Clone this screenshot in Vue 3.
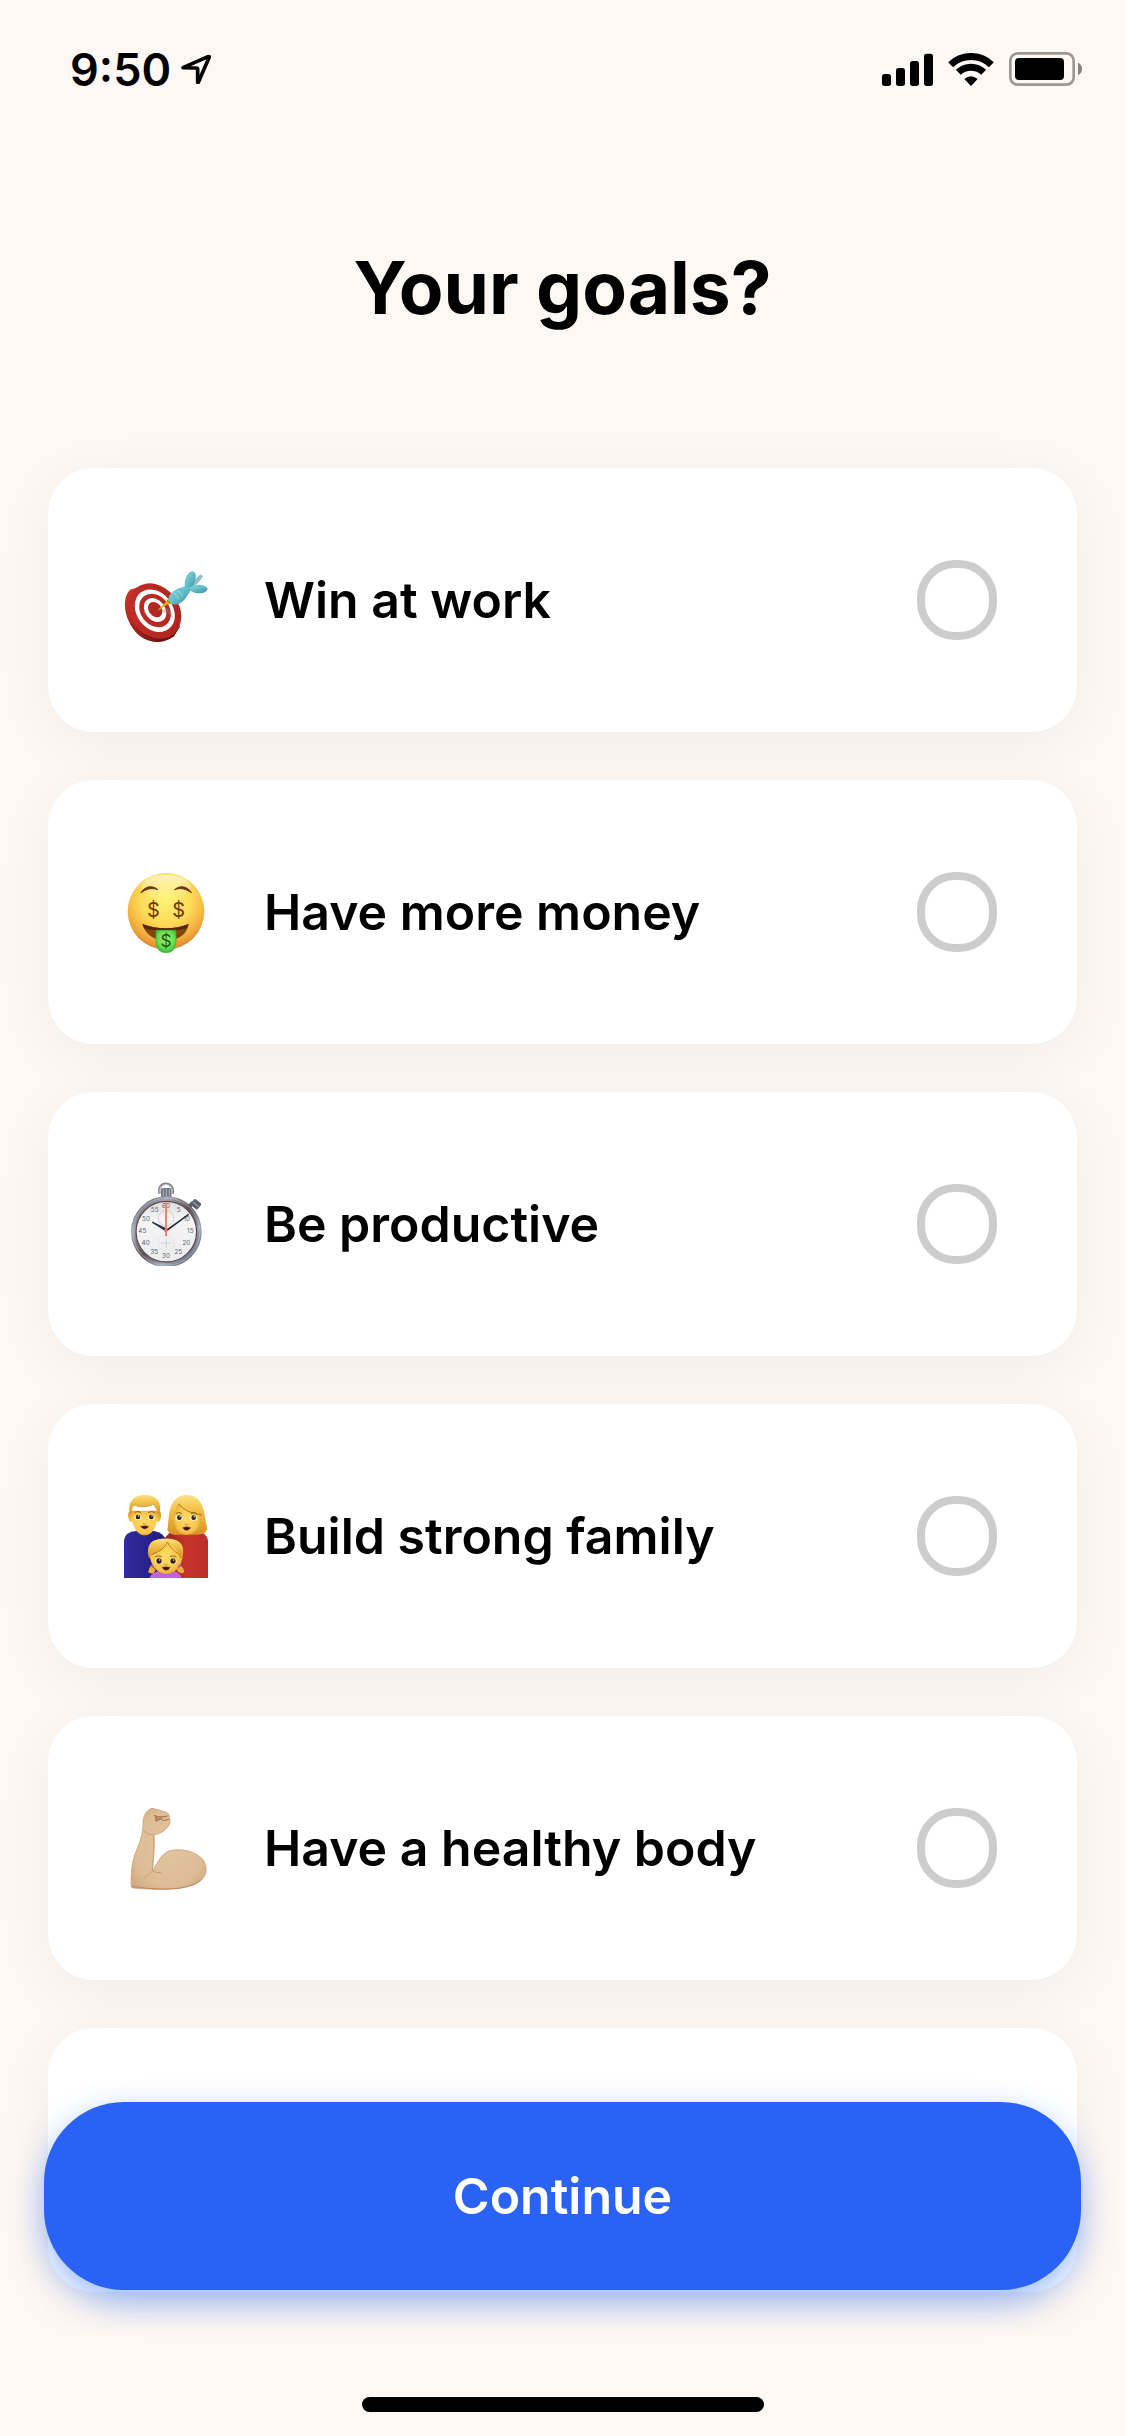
<script setup>
import { ref } from 'vue'

const goals = [
  { id: 'work', label: 'Win at work', box: '72 24 252 252' },
  { id: 'money', label: 'Have more money', box: '72 60 252 252' },
  { id: 'time', label: 'Be productive', box: '72 51 252 252' },
  { id: 'family', label: 'Build strong family', box: '72 57 252 252' },
  { id: 'body', label: 'Have a healthy body', box: '72 48 252 252' },
]
const selected = ref([])

const dial = [
  ['60', 198, 130], ['5', 236, 140], ['10', 260, 167], ['15', 271, 204],
  ['20', 259, 239], ['25', 235, 267], ['30', 198, 278], ['35', 163, 267],
  ['40', 137, 239], ['45', 127, 204], ['50', 138, 167], ['55', 164, 140],
]
</script>

<template>
  <div class="screen">
    <header class="status">
      <div class="clock">
        <span>9:50</span>
        <svg class="arrow" viewBox="540 99 90 90" aria-hidden="true">
          <path d="M546 140 L621 107 Q626 105 624 110 L592 184 L590 184 L590 145 Q590 141 586 141 Z" fill="none" stroke="#000" stroke-width="11" stroke-linejoin="round" />
        </svg>
      </div>
      <div class="indicators">
        <svg class="signal" viewBox="126 96 153 99" aria-hidden="true">
          <rect x="126" y="159" width="27" height="36" rx="8" />
          <rect x="168" y="141" width="27" height="54" rx="8" />
          <rect x="210" y="120" width="27" height="75" rx="8" />
          <rect x="252" y="98" width="27" height="97" rx="8" />
        </svg>
        <svg class="wifi" viewBox="324 96 138 99" aria-hidden="true">
          <g fill="none" stroke="#000" stroke-width="21">
            <path d="M332 131 A88 88 0 0 1 454 131" />
            <path d="M355 154 A55 55 0 0 1 431 154" />
          </g>
          <path d="M393 195 L373 174 Q393 158 413 174 Z" />
        </svg>
        <svg class="battery" viewBox="507 96 219 102" aria-hidden="true">
          <rect x="511" y="100" width="190" height="94" rx="22" fill="none" stroke="#9b9793" stroke-width="8" />
          <rect x="525" y="114" width="147" height="66" rx="12" />
          <path d="M714 128 Q726 133 726 147 Q726 160 714 165 Z" fill="#85817e" />
        </svg>
      </div>
    </header>

    <h1 class="title">Your goals?</h1>

    <main class="goals">
      <label v-for="goal in goals" :key="goal.id" class="card">
        <svg class="emoji" :viewBox="goal.box" aria-hidden="true">
          <template v-if="goal.id === 'work'">
            <defs>
              <linearGradient id="rim" x1="0" y1="0" x2="1" y2="1">
                <stop offset="0" stop-color="#cf3a30" /><stop offset=".5" stop-color="#a3211c" /><stop offset="1" stop-color="#4a0d0a" />
              </linearGradient>
              <linearGradient id="face" x1="0" y1="0" x2="1" y2="1">
                <stop offset="0" stop-color="#c62e27" /><stop offset="1" stop-color="#aa241e" />
              </linearGradient>
              <linearGradient id="dart" x1="0" y1="0" x2="1" y2="1">
                <stop offset="0" stop-color="#8fd6de" /><stop offset=".5" stop-color="#62bdc8" /><stop offset="1" stop-color="#398d99" />
              </linearGradient>
            </defs>
            <path d="M90 119 C64 146 72 204 105 244 C136 281 188 286 222 259 L240 230 L120 110 Z" fill="url(#rim)" />
            <g transform="rotate(-38 165 183)">
              <ellipse cx="165" cy="183" rx="72" ry="89" fill="url(#face)" />
              <ellipse cx="165" cy="182" rx="54" ry="69" fill="#fff" />
              <ellipse cx="166" cy="182" rx="43" ry="54" fill="#b82923" />
              <ellipse cx="167" cy="181" rx="30" ry="39" fill="#fff" />
              <ellipse cx="168" cy="180" rx="19" ry="25" fill="#b32822" />
            </g>
            <path d="M178 184 L204 191 L220 207 L218 191 L203 174 Z" fill="#8e8581" opacity=".35" />
            <path d="M173 181 L200 154 L205 144 L214 157 L218 162 L203 163 L176 181 Z" fill="#dfb51f" />
            <path d="M200 150 L211 160" stroke="#8c680c" stroke-width="3" />
            <path d="M265 110 L299 75 Q307 71 308 79 Q305 90 280 112 Z" fill="#8dbfc5" />
            <path d="M254 112 C252 86 264 64 278 64 C292 67 291 91 273 116 Z" fill="url(#dart)" />
            <path d="M265 116 C281 98 315 102 323 116 C320 130 291 136 271 122 Z" fill="url(#dart)" />
            <path d="M206 151 C204 132 223 118 247 112 L265 109 L272 121 C261 140 249 163 225 164 Q213 164 206 151 Z" fill="url(#dart)" />
            <path d="M220 128 Q233 135 237 148 M232 122 Q244 129 248 140" fill="none" stroke="#a5e2e8" stroke-width="3" opacity=".7" />
          </template>

          <template v-else-if="goal.id === 'money'">
            <defs>
              <radialGradient id="skin" cx=".5" cy=".33" r=".66">
                <stop offset="0" stop-color="#fff477" /><stop offset=".5" stop-color="#fddc58" /><stop offset=".8" stop-color="#f4b23e" /><stop offset="1" stop-color="#df8930" />
              </radialGradient>
              <linearGradient id="shine" x1="0" y1="0" x2="0" y2="1">
                <stop offset="0" stop-color="#fff" stop-opacity=".6" /><stop offset="1" stop-color="#fff" stop-opacity="0" />
              </linearGradient>
              <radialGradient id="tongue" cx=".5" cy=".4" r=".65">
                <stop offset="0" stop-color="#a4f471" /><stop offset=".65" stop-color="#62df4b" /><stop offset="1" stop-color="#27a536" />
              </radialGradient>
            </defs>
            <circle cx="198" cy="184" r="115" fill="url(#skin)" />
            <ellipse cx="198" cy="110" rx="73" ry="36" fill="url(#shine)" />
            <path d="M123 128 C135 108 158 105 173 119 C154 112 139 117 123 128 Z M224 119 C239 105 262 108 274 128 C257 117 243 112 224 119 Z" fill="#6a310c" stroke="#6a310c" stroke-width="3" stroke-linejoin="round" />
            <path d="M127 222 C170 239 226 239 266 222 C262 249 241 271 198 272 C156 271 134 248 127 222 Z" fill="#80470c" />
            <path d="M127 222 C170 239 226 239 266 222 L260 235 C223 246 174 246 133 235 Z" fill="#58270a" />
            <path d="M168 241 L228 241 L228 278 Q225 308 198 308 Q171 308 168 278 Z" fill="url(#tongue)" stroke="#42b73b" stroke-width="2" />
            <g class="dollar"><text x="160" y="200">$</text><text x="236" y="200">$</text><text class="small" x="198" y="290">$</text></g>
          </template>

          <template v-else-if="goal.id === 'time'">
            <defs>
              <linearGradient id="steel" x1="0" y1="0" x2="1" y2="1">
                <stop offset="0" stop-color="#4c4b54" /><stop offset=".25" stop-color="#a5a8b3" /><stop offset=".5" stop-color="#594c50" /><stop offset=".72" stop-color="#9da9bb" /><stop offset="1" stop-color="#454652" />
              </linearGradient>
              <linearGradient id="dial" x1="0" y1="0" x2="0" y2="1">
                <stop offset="0" stop-color="#d8d8da" /><stop offset=".3" stop-color="#f4f4f5" /><stop offset="1" stop-color="#ececee" />
              </linearGradient>
            </defs>
            <path d="M179 86 C168 46 227 46 218 86" fill="none" stroke="#7b7e87" stroke-width="7" />
            <path d="M180 86 C170 49 225 49 216 86" fill="none" stroke="#dedfe5" stroke-width="2" />
            <rect x="183" y="69" width="31" height="31" rx="5" fill="#707681" />
            <path d="M190 71 V94 M199 71 V94 M208 71 V94" stroke="#adb3bb" stroke-width="3" />
            <path d="M266 126 L281 112" stroke="#555a65" stroke-width="12" />
            <rect x="274" y="106" width="27" height="23" rx="5" transform="rotate(39 287 118)" fill="#59616d" />
            <path d="M279 111 L296 125" stroke="#949ca6" stroke-width="4" />
            <circle cx="199" cy="200" r="99" fill="url(#dial)" stroke="url(#steel)" stroke-width="14" />
            <circle cx="199" cy="200" r="101" fill="none" stroke="#c6dcf2" stroke-width="2" opacity=".7" />
            <circle cx="199" cy="200" r="91" fill="none" stroke="#5e474b" stroke-width="4" />
            <circle cx="198" cy="160" r="23" fill="none" stroke="#b9bbc0" stroke-width="3" stroke-dasharray="3 2" />
            <circle cx="199" cy="234" r="24" fill="none" stroke="#dddee0" stroke-width="3" stroke-dasharray="4 3" />
            <path d="M199 220 V252 M184 234 H214" stroke="#c5c7ca" stroke-width="2" />
            <g class="numbers"><text v-for="[n, x, y] in dial" :key="n" :x="x" :y="y">{{ n }}</text></g>
            <path d="M158 172 L199 198 L265 149 L202 194 Z" fill="#283342" stroke="#283342" stroke-width="4" stroke-linejoin="round" />
            <path d="M198 110 V214" stroke="#eb8768" stroke-width="6" />
            <circle cx="198" cy="196" r="5" fill="#df7354" />
          </template>

          <template v-else-if="goal.id === 'family'">
            <defs>
              <radialGradient id="head" cx=".48" cy=".48" r=".62">
                <stop offset="0" stop-color="#ffdc68" /><stop offset=".65" stop-color="#f9c64c" /><stop offset="1" stop-color="#d6912a" />
              </radialGradient>
              <linearGradient id="hair" x1="0" y1="0" x2="0" y2="1">
                <stop offset="0" stop-color="#fbe389" /><stop offset=".3" stop-color="#f4c850" /><stop offset="1" stop-color="#d89124" />
              </linearGradient>
              <linearGradient id="blue"><stop offset="0" stop-color="#302ca2" /><stop offset="1" stop-color="#201c78" /></linearGradient>
              <linearGradient id="red"><stop offset="0" stop-color="#9e211c" /><stop offset=".5" stop-color="#c4342b" /><stop offset="1" stop-color="#bd2e27" /></linearGradient>
            </defs>
            <path d="M72 312 V195 Q77 169 108 168 H162 Q191 173 198 196 V312 Z" fill="url(#blue)" />
            <path d="M192 312 V194 Q204 169 234 168 H290 Q319 172 324 196 V312 Z" fill="url(#red)" />
            <path d="M90 107 Q80 115 87 135 Q92 145 97 139 C103 165 116 181 134 181 C154 181 165 164 170 139 Q178 145 182 130 Q187 114 177 107 Z" fill="url(#head)" />
            <path d="M89 113 C83 82 99 60 134 60 C170 59 187 83 179 113 L173 119 Q171 99 159 89 Q126 102 104 91 Q94 100 94 118 Z" fill="url(#hair)" />
            <path d="M100 89 Q126 103 165 87" fill="none" stroke="#d09a38" stroke-width="2" />
            <path d="M202 164 C209 128 201 63 259 60 C317 59 313 128 322 163 Q315 179 292 179 H224 Q207 177 202 164 Z" fill="url(#hair)" />
            <path d="M223 108 Q213 177 260 180 Q301 175 303 123 Q268 114 235 86 Q230 100 223 108 Z" fill="url(#head)" />
            <path d="M235 86 Q256 114 306 120" fill="none" stroke="#b07822" stroke-width="3" />
            <path d="M147 312 Q153 292 177 288 H221 Q241 294 246 312 Z" fill="#bd67d6" />
            <path d="M151 251 C138 216 150 191 197 191 C245 191 256 217 246 254 Q238 292 198 297 Q160 292 151 251 Z" fill="url(#head)" />
            <path d="M147 249 C137 208 153 190 197 191 C243 190 257 212 247 249 L239 250 Q235 223 203 201 Q196 226 157 238 Z" fill="url(#hair)" />
            <path d="M157 238 Q193 225 202 201 Q213 224 239 239" fill="none" stroke="#bd7d20" stroke-width="3" />
            <path d="M155 270 Q145 280 144 292 Q160 301 167 286 Z M240 270 Q254 281 252 292 Q239 300 231 286 Z" fill="#e9ae3b" />
            <path d="M153 270 L161 277 M242 270 L235 277" stroke="#bc48ba" stroke-width="5" />
            <g fill="#fff5dc">
              <ellipse cx="114" cy="127" rx="10" ry="8" /><ellipse cx="154" cy="127" rx="10" ry="8" />
              <ellipse cx="237" cy="129" rx="11" ry="8" /><ellipse cx="281" cy="129" rx="11" ry="8" />
              <ellipse cx="176" cy="259" rx="11" ry="9" /><ellipse cx="219" cy="259" rx="11" ry="9" />
            </g>
            <g fill="#38210c">
              <circle cx="114" cy="126" r="7" /><circle cx="154" cy="126" r="7" />
              <circle cx="238" cy="128" r="7" /><circle cx="281" cy="128" r="7" />
              <circle cx="177" cy="258" r="8" /><circle cx="219" cy="258" r="8" />
            </g>
            <g fill="#fff">
              <circle cx="116" cy="123" r="2" /><circle cx="156" cy="123" r="2" />
              <circle cx="240" cy="125" r="2" /><circle cx="283" cy="125" r="2" />
              <circle cx="179" cy="255" r="2" /><circle cx="221" cy="255" r="2" />
            </g>
            <g fill="none" stroke="#936020" stroke-width="3" stroke-linecap="round">
              <path d="M105 112 Q114 106 122 112 M146 112 Q155 106 163 112 M228 115 Q237 108 245 115 M274 115 Q283 108 290 115 M167 245 Q176 240 184 244 M211 244 Q220 240 228 245" />
              <path d="M130 146 Q134 149 138 146 M255 148 Q260 151 264 148 M194 269 Q198 272 202 269" stroke="#cf8a2f" />
            </g>
            <g fill="#35130c" stroke="#a94b23" stroke-width="2">
              <path d="M122 154 Q134 151 146 154 Q143 162 134 162 Q126 162 122 154 Z" />
              <path d="M248 158 Q260 153 272 158 Q267 166 260 166 Q252 166 248 158 Z" />
              <path d="M186 277 Q198 274 211 277 Q206 286 198 286 Q191 286 186 277 Z" />
            </g>
          </template>

          <template v-else>
            <defs>
              <radialGradient id="arm" cx=".5" cy=".5" r=".7">
                <stop offset="0" stop-color="#e1c39d" /><stop offset=".65" stop-color="#dcbd95" /><stop offset="1" stop-color="#cfa27a" />
              </radialGradient>
            </defs>
            <path d="M94 290 C92 266 94 224 104 195 C116 165 128 137 129 104 C127 83 136 68 147 59 Q155 52 166 57 L198 66 Q210 72 208 82 Q212 91 209 101 C201 117 187 130 162 135 C165 169 159 206 157 242 C170 226 178 197 206 183 C249 172 296 187 313 215 C326 244 315 269 286 282 C245 299 190 301 147 297 L99 294 Q95 294 94 290 Z" fill="url(#arm)" stroke="#c8966a" stroke-width="2" />
            <path d="M96 289 Q145 298 199 297 Q275 297 302 270" fill="none" stroke="#b36e42" stroke-width="3" opacity=".6" />
            <path d="M161 136 Q163 190 158 242 Q147 255 133 263 M158 243 Q169 249 184 248 M131 122 Q143 137 161 134" fill="none" stroke="#b9814f" stroke-width="3" opacity=".5" />
            <path d="M164 78 Q174 78 178 82 L190 82 Q186 88 178 90 L167 94 Z" fill="#bf9068" />
            <path d="M162 76 L174 80 Q190 82 203 78 M168 82 L168 93 M168 94 L181 86 L190 92 L207 88" fill="none" stroke="#a87149" stroke-width="3" />
          </template>
        </svg>
        <span class="name">{{ goal.label }}</span>
        <input v-model="selected" type="checkbox" class="tick" :value="goal.id" />
      </label>
      <div class="card" aria-hidden="true"></div>
    </main>

    <footer class="dock">
      <button type="button" class="continue">Continue</button>
      <div class="home"></div>
    </footer>
  </div>
</template>

<style>
body {
  margin: 0;
  background: #fef8f4;
}
</style>

<style scoped>
.screen {
  position: relative;
  display: flex;
  flex-direction: column;
  height: 100vh;
  overflow: hidden;
  box-sizing: border-box;
  padding-bottom: 102px;
  background: #fef8f4;
  color: #000;
  font-family: Inter, "Liberation Sans", sans-serif;
  font-weight: 600;
}
.status {
  flex: none;
  display: flex;
  align-items: center;
  justify-content: space-between;
  height: 138px;
  padding: 0 43px 0 70px;
}
.clock {
  display: flex;
  align-items: center;
  gap: 10px;
  font-size: 45px;
}
.arrow {
  width: 30px;
  height: 30px;
}
.indicators {
  display: flex;
  align-items: center;
  gap: 15px;
}
.signal {
  width: 51px;
  height: 33px;
}
.wifi {
  width: 46px;
  height: 33px;
}
.battery {
  width: 73px;
  height: 34px;
}
.title {
  flex: none;
  margin: 100px 0 70px;
  font-size: 73px;
  line-height: 100px;
  font-weight: 700;
  text-align: center;
}
.goals {
  flex: 1;
  min-height: 0;
  overflow: hidden;
  display: flex;
  flex-direction: column;
  gap: 48px;
  padding: 60px 48px 0;
}
.card {
  flex: none;
  display: flex;
  align-items: center;
  gap: 56px;
  height: 264px;
  box-sizing: border-box;
  padding: 0 80px 0 76px;
  border-radius: 46px;
  background: #fff;
  box-shadow: 0 12px 60px rgba(0, 0, 0, 0.05);
}
.emoji {
  flex: none;
  width: 84px;
  height: 84px;
}
.name {
  flex: 1;
  font-size: 50px;
  line-height: 60px;
}
.tick {
  appearance: none;
  flex: none;
  width: 80px;
  height: 80px;
  box-sizing: border-box;
  margin: 0;
  border: 8px solid #ccc;
  border-radius: 38px;
  background: #fff;
}
.tick:checked {
  border-color: #2a62f6;
  background: #2a62f6;
}
.dollar text {
  font-family: Inter, sans-serif;
  font-weight: 400;
  font-size: 60px;
  text-anchor: middle;
  fill: #713708;
}
.dollar .small {
  font-size: 52px;
  fill: #185815;
}
.numbers text {
  font-family: Inter, sans-serif;
  font-weight: 400;
  font-size: 19px;
  text-anchor: middle;
  fill: #62656c;
}
.dock {
  position: absolute;
  left: 0;
  right: 0;
  bottom: 0;
  display: flex;
  flex-direction: column;
  align-items: center;
  gap: 107px;
  padding: 0 44px 24px;
}
.continue {
  width: 100%;
  height: 188px;
  border: 0;
  border-radius: 80px;
  background: #2a62f6;
  box-shadow: 0 12px 32px rgba(32, 104, 246, 0.45);
  color: #fff;
  font: inherit;
  font-size: 50px;
}
.home {
  width: 402px;
  height: 15px;
  border-radius: 8px;
  background: #000;
}
</style>
